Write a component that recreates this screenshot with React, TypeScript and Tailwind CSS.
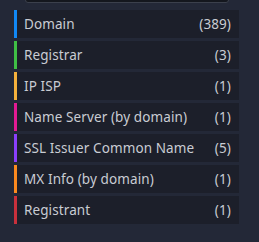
import React from "react";

const rows = [
  { label: "Domain", count: 389, color: "bg-[#1188f5]" },
  { label: "Registrar", count: 3, color: "bg-[#3fbf45]" },
  { label: "IP ISP", count: 1, color: "bg-[#f5b13c]" },
  { label: "Name Server (by domain)", count: 1, color: "bg-[#e21a93]" },
  { label: "SSL Issuer Common Name", count: 5, color: "bg-[#8a3ffc]" },
  { label: "MX Info (by domain)", count: 1, color: "bg-[#fb8a1f]" },
  { label: "Registrant", count: 1, color: "bg-[#c8303c]" },
];

export default function App() {
  return (
    <div className="w-[259px] h-[242px] bg-[#232837] overflow-hidden relative" style={{ fontFamily: '"Noto Sans", "Open Sans", sans-serif' }}>
      <div className="absolute left-[25px] top-[-6px] w-[204px] h-[9px] rounded-b-[3px] bg-[#14171e] border border-[#3b404c]" />
      <div className="flex flex-col gap-[3px] pt-[10px] pl-[14px] w-[239px]">
        {rows.map((r) => (
          <div key={r.label} className="flex items-stretch h-[28px] bg-[#1c1f2a]">
            <div className={`w-[3px] ${r.color}`} />
            <div className="flex-1 flex items-center justify-between pl-[7px] pr-[8px] text-[13.5px] text-[#c9ccd3] tracking-[0.1px]">
              <span>{r.label}</span>
              <span>({r.count})</span>
            </div>
          </div>
        ))}
      </div>
    </div>
  );
}
